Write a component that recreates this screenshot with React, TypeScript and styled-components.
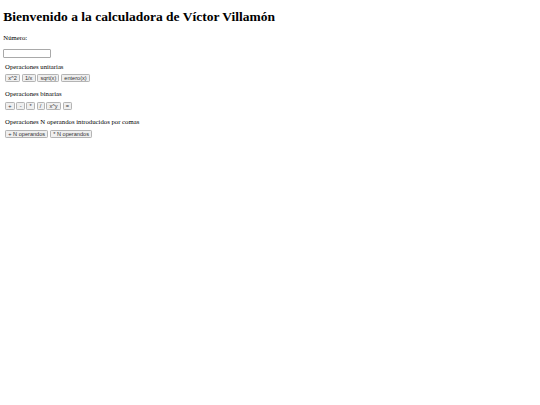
import React from 'react';
import styled, { createGlobalStyle } from 'styled-components';

const GlobalStyle = createGlobalStyle`
  html, body {
    margin: 0;
    padding: 0;
    background: #ffffff;
  }
  body {
    font-family: "Liberation Serif", "Times New Roman", serif;
    color: #000;
  }
`;

const Page = styled.main`
  padding: 9px 3.3px;
  font-size: 6.72px;
  line-height: 7.7px;
`;

const Title = styled.h1`
  margin: 0 0 9.8px;
  font-size: 13.5px;
  line-height: 15.5px;
  font-weight: bold;
`;

const FieldLabel = styled.label`
  display: block;
`;

const NumberInput = styled.input`
  display: block;
  box-sizing: border-box;
  width: 48px;
  height: 9px;
  margin: 6.5px 0 0;
  padding: 0 1px;
  border: 1px solid #a9a9a9;
  border-radius: 1px;
  font-size: 5.6px;
  font-family: "Liberation Sans", Arial, sans-serif;
  outline: none;
`;

const Group = styled.section<{ $first?: boolean }>`
  margin-top: ${p => (p.$first ? '5px' : '8.3px')};
  padding-left: 1.8px;
`;

const GroupTitle = styled.div`
  height: 7.7px;
`;

const ButtonRow = styled.div`
  display: flex;
  gap: 1.7px;
  margin-top: 3.8px;
`;

const OpButton = styled.button`
  box-sizing: border-box;
  height: 8px;
  padding: 0 2.2px;
  border: 1px solid #b4b4b4;
  border-radius: 1.2px;
  background: #efefef;
  color: #333;
  font-family: "Liberation Sans", Arial, sans-serif;
  font-size: 5.6px;
  font-weight: normal;
  line-height: 6px;
  cursor: pointer;
`;

const groups = [
  { title: 'Operaciones unitarias', ops: ['x^2', '1/x', 'sqrt(x)', 'entero(x)'] },
  { title: 'Operaciones binarias', ops: ['+', '-', '*', '/', 'x^y', '='] },
  { title: 'Operaciones N operandos introducidos por comas', ops: ['+ N operandos', '* N operandos'] }
];

export default function App() {
  return (
    <>
      <GlobalStyle />
      <Page>
        <Title>Bienvenido a la calculadora de Víctor Villamón</Title>
        <FieldLabel htmlFor="numero">Número:</FieldLabel>
        <NumberInput id="numero" type="text" />
        {groups.map((g, i) => (
          <Group key={g.title} $first={i === 0}>
            <GroupTitle>{g.title}</GroupTitle>
            <ButtonRow>
              {g.ops.map(op => <OpButton key={op}>{op}</OpButton>)}
            </ButtonRow>
          </Group>
        ))}
      </Page>
    </>
  );
}
